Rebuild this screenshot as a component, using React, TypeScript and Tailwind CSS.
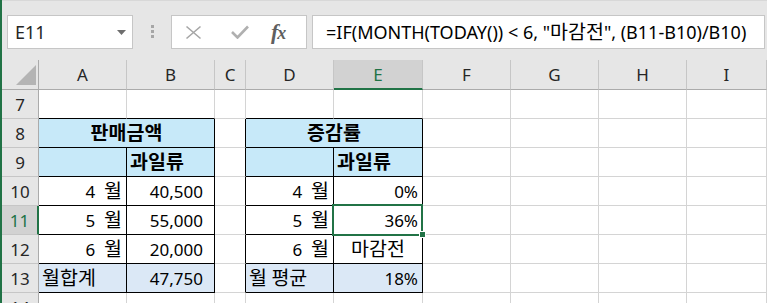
import React from "react";

const COLS = ["A", "B", "C", "D", "E", "F", "G", "H", "I"];
const ROWS = [7, 8, 9, 10, 11, 12, 13, 14];

type CellDef = {
  text?: string;
  align?: "left" | "right" | "center";
  bold?: boolean;
  bg?: string;
  span?: number;
  pr?: string;
};

const BLUE = "bg-[#c7e9f9]";
const BLUE2 = "bg-[#dbe8f6]";

function K({ text, big }: { text: string; big?: boolean }) {
  const parts = text.split(/([\uac00-\ud7a3]+)/);
  return (
    <>
      {parts.map((p, i) =>
        /[\uac00-\ud7a3]/.test(p) ? (
          <span key={i} className={big ? "text-[19.5px]" : "text-[19.5px]"}>
            {p}
          </span>
        ) : (
          <span key={i} className="whitespace-pre">{p}</span>
        )
      )}
    </>
  );
}

const cells: Record<string, CellDef> = {
  A8: { text: "판매금액", align: "center", bold: true, bg: BLUE, span: 2 },
  D8: { text: "증감률", align: "center", bold: true, bg: BLUE, span: 2 },
  A9: { bg: BLUE },
  B9: { text: "과일류", align: "left", bold: true, bg: BLUE },
  D9: { bg: BLUE },
  E9: { text: "과일류", align: "left", bold: true, bg: BLUE },
  A10: { text: "4  월", align: "right" },
  B10: { text: "40,500", align: "right", pr: "pr-[11px]" },
  D10: { text: "4  월", align: "right" },
  E10: { text: "0%", align: "right" },
  A11: { text: "5  월", align: "right" },
  B11: { text: "55,000", align: "right", pr: "pr-[11px]" },
  D11: { text: "5  월", align: "right" },
  E11: { text: "36%", align: "right" },
  A12: { text: "6  월", align: "right" },
  B12: { text: "20,000", align: "right", pr: "pr-[11px]" },
  D12: { text: "6  월", align: "right" },
  E12: { text: "마감전", align: "center" },
  A13: { text: "월합계", align: "left", bg: BLUE2 },
  B13: { text: "47,750", align: "right", bg: BLUE2, pr: "pr-[11px]" },
  D13: { text: "월 평균", align: "left", bg: BLUE2 },
  E13: { text: "18%", align: "right", bg: BLUE2 },
};

function rightBlack(col: string, row: number) {
  if (row >= 9 && row <= 13 && (col === "A" || col === "D")) return true;
  if (row >= 8 && row <= 13 && (col === "B" || col === "C" || col === "E")) return true;
  return false;
}

function bottomBlack(col: string, row: number) {
  return row >= 7 && row <= 13 && ["A", "B", "D", "E"].includes(col);
}

function Cell({ col, row }: { col: string; row: number }) {
  const key = col + row;
  const def = cells[key] || {};
  const span = def.span || 1;
  const lastCol = span === 2 ? COLS[COLS.indexOf(col) + 1] : col;
  const rb = rightBlack(lastCol, row) ? "border-r-black" : "border-r-[#d4d4d4]";
  const bb = bottomBlack(col, row) ? "border-b-black" : "border-b-[#d4d4d4]";
  const justify =
    def.align === "right" ? "justify-end" : def.align === "center" ? "justify-center" : "justify-start";
  const pad =
    def.align === "right" ? def.pr || "pr-[4px]" : def.align === "left" ? "pl-[3px]" : "";
  return (
    <div
      className={`${span === 2 ? "col-span-2" : ""} ${def.bg || "bg-white"} border-r border-b ${rb} ${bb} flex items-center ${justify} ${pad} ${def.bold ? "font-bold" : ""} text-black whitespace-nowrap overflow-hidden`}
    >
      {def.text ? <K text={def.text} /> : null}
    </div>
  );
}

export default function App() {
  const rendered: React.ReactNode[] = [];
  rendered.push(
    <div key="corner" className="bg-[#e6e6e6] border-r border-b border-r-[#ababab] border-b-[#ababab] relative">
      <svg className="absolute right-[2px] bottom-[4px]" width="20" height="20" viewBox="0 0 20 20">
        <polygon points="20,0 20,20 0,20" fill="#b4b4b4" />
      </svg>
    </div>
  );
  COLS.forEach((c) => {
    const sel = c === "E";
    rendered.push(
      <div
        key={"h" + c}
        className={`${sel ? "bg-[#d2d2d2] text-[#217346] border-b-2 border-b-[#217346]" : "bg-[#e6e6e6] text-[#262626] border-b border-b-[#ababab]"} border-r border-r-[#c6c6c6] flex items-center justify-center`}
      >
        {c}
      </div>
    );
  });
  ROWS.forEach((r) => {
    const sel = r === 11;
    rendered.push(
      <div
        key={"r" + r}
        className={`${sel ? "bg-[#d2d2d2] text-[#217346] border-r-2 border-r-[#217346]" : "bg-[#e6e6e6] text-[#262626] border-r border-r-[#ababab]"} border-b border-b-[#c6c6c6] flex items-center justify-center`}
      >
        {r}
      </div>
    );
    COLS.forEach((c) => {
      if ((c === "B" || c === "E") && r === 8) return;
      rendered.push(<Cell key={c + r} col={c} row={r} />);
    });
  });

  return (
    <div className="w-[767px] h-[303px] overflow-hidden flex bg-[#e6e6e6] font-['Noto_Sans','Noto_Sans_CJK_KR',sans-serif] text-[17px] leading-none">
      <div className="w-[2px] h-full bg-[#217346] shrink-0" />
      <div className="flex-1 flex flex-col min-w-0 relative">
        <div className="h-[60px] shrink-0 flex pt-[14px] pb-[12px] border-t border-t-[#d8d8d8]">
          <div className="ml-[5px] w-[126px] h-[34px] bg-white border border-[#c6c6c6] flex items-center justify-between pl-[7px] pr-[6px] text-[#262626] text-[18px]">
            <span>E11</span>
            <svg width="9" height="5" viewBox="0 0 9 5">
              <polygon points="0,0 9,0 4.5,5" fill="#6e6e6e" />
            </svg>
          </div>
          <div className="w-[38px] flex flex-col items-center justify-center gap-[2px]">
            <div className="w-[3px] h-[3px] bg-[#a6a6a6]" />
            <div className="w-[3px] h-[3px] bg-[#a6a6a6]" />
            <div className="w-[3px] h-[3px] bg-[#a6a6a6]" />
          </div>
          <div className="w-[136px] h-[34px] bg-white border border-[#c6c6c6] flex items-center">
            <svg className="ml-[13px]" width="17" height="15" viewBox="0 0 17 15">
              <path d="M1.5 1.5 L15.5 13.5 M15.5 1.5 L1.5 13.5" stroke="#a6a6a6" strokeWidth="1.6" fill="none" />
            </svg>
            <svg className="ml-[29px]" width="18" height="14" viewBox="0 0 18 14">
              <path d="M1 7 L6.5 12.5 L17 1.5" stroke="#b0b0b0" strokeWidth="2.6" fill="none" />
            </svg>
            <span className="ml-[22px] font-['Liberation_Serif',serif] italic font-bold text-[#5f5f5f] text-[22px] tracking-[-1px]">
              f<span className="text-[18px]">x</span>
            </span>
          </div>
          <div className="ml-[5px] mr-[2px] flex-1 h-[34px] bg-white border border-[#c6c6c6] flex items-center pl-[13px] text-black whitespace-nowrap overflow-hidden text-[18px]">
            <K text={'=IF(MONTH(TODAY()) < 6, "마감전", (B11-B10)/B10)'} big />
          </div>
        </div>
        <div className="grid grid-cols-[37px_88px_88px_31px_88px_89px_88px_88px_88px_1fr] grid-rows-[30px_repeat(7,29px)_29px] flex-1">
          {rendered}
        </div>
        <div className="absolute left-[330px] top-[204px] w-[91px] h-[32px] border-2 border-[#217346] pointer-events-none" />
        <div className="absolute left-[417px] top-[231px] w-[7px] h-[7px] bg-[#217346] border border-white pointer-events-none" />
      </div>
    </div>
  );
}
